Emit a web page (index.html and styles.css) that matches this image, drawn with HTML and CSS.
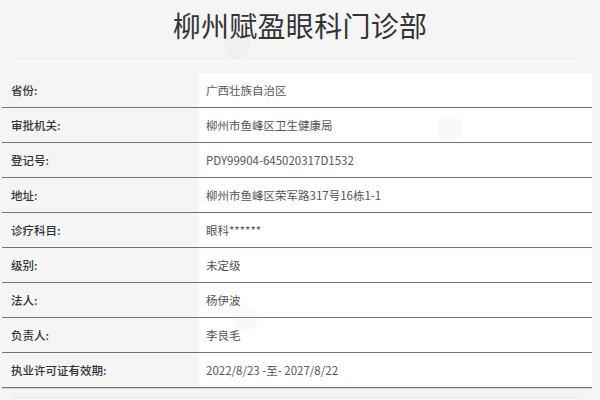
FILE: index.html
```html
<!DOCTYPE html>
<html lang="zh">
<head>
<meta charset="utf-8">
<title>柳州赋盈眼科门诊部</title>
<link rel="stylesheet" href="styles.css">
</head>
<body>
<div class="page">
  <h1 class="title">柳州赋盈眼科门诊部</h1>
  <div class="sep"></div>
  <div class="info">
    <div class="row"><div class="label">省份:</div><div class="value">广西壮族自治区</div></div>
    <div class="row"><div class="label">审批机关:</div><div class="value">柳州市鱼峰区卫生健康局</div></div>
    <div class="row"><div class="label">登记号:</div><div class="value">PDY99904-645020317D1532</div></div>
    <div class="row"><div class="label">地址:</div><div class="value">柳州市鱼峰区荣军路317号16栋1-1</div></div>
    <div class="row"><div class="label">诊疗科目:</div><div class="value">眼科******</div></div>
    <div class="row"><div class="label">级别:</div><div class="value">未定级</div></div>
    <div class="row"><div class="label">法人:</div><div class="value">杨伊波</div></div>
    <div class="row"><div class="label">负责人:</div><div class="value">李良毛</div></div>
    <div class="row"><div class="label">执业许可证有效期:</div><div class="value">2022/8/23 -至- 2027/8/22</div></div>
  </div>
  <div class="next"></div>
  <span class="mark mark-a"></span>
  <span class="mark mark-b"></span>
  <span class="mark mark-c"></span>
</div>
</body>
</html>
```

FILE: styles.css
```css
html, body {
  margin: 0;
  padding: 0;
  background: #f5f5f5;
}
.page {
  position: relative;
  width: 600px;
  height: 400px;
  overflow: hidden;
  font-family: "Noto Sans CJK SC", "Noto Sans", sans-serif;
}
.title {
  margin: 0;
  height: 50px;
  line-height: 50px;
  text-align: center;
  font-size: 28px;
  font-weight: 400;
  color: #333;
  letter-spacing: 0.3px;
  position: relative;
  z-index: 1;
}
.sep {
  margin: 8px 20px 0 15px;
  height: 4px;
  background: #f8f8f8;
  border-top: 1px solid #f0f0f0;
}
.info {
  margin: 10px 8px 0 2px;
}
.row {
  display: grid;
  grid-template-columns: 197px 1fr;
  height: 34px;
  border-bottom: 1px solid #5f7d72;
  box-shadow: 0 1px 0 rgba(120, 150, 140, 0.3);
}
.label {
  display: flex;
  align-items: center;
  padding-left: 9px;
  font-size: 11.5px;
  font-weight: 500;
  color: #333;
  background: #f5f5f5;
}
.value {
  display: flex;
  align-items: center;
  padding-left: 7px;
  font-size: 11.5px;
  color: #555;
  background: #fff;
}
.next {
  margin: 9px 20px 0 13px;
  height: 20px;
  border: 1px solid #e6e6e6;
  background: #f7f7f7;
}
.mark {
  position: absolute;
  width: 26px;
  height: 26px;
  border-radius: 50%;
  background: rgba(200, 200, 200, 0.1);
}
.mark-a { left: 224px; top: 33px; }
.mark-b { left: 437px; top: 115px; }
.mark-c { left: 232px; top: 305px; }
```
